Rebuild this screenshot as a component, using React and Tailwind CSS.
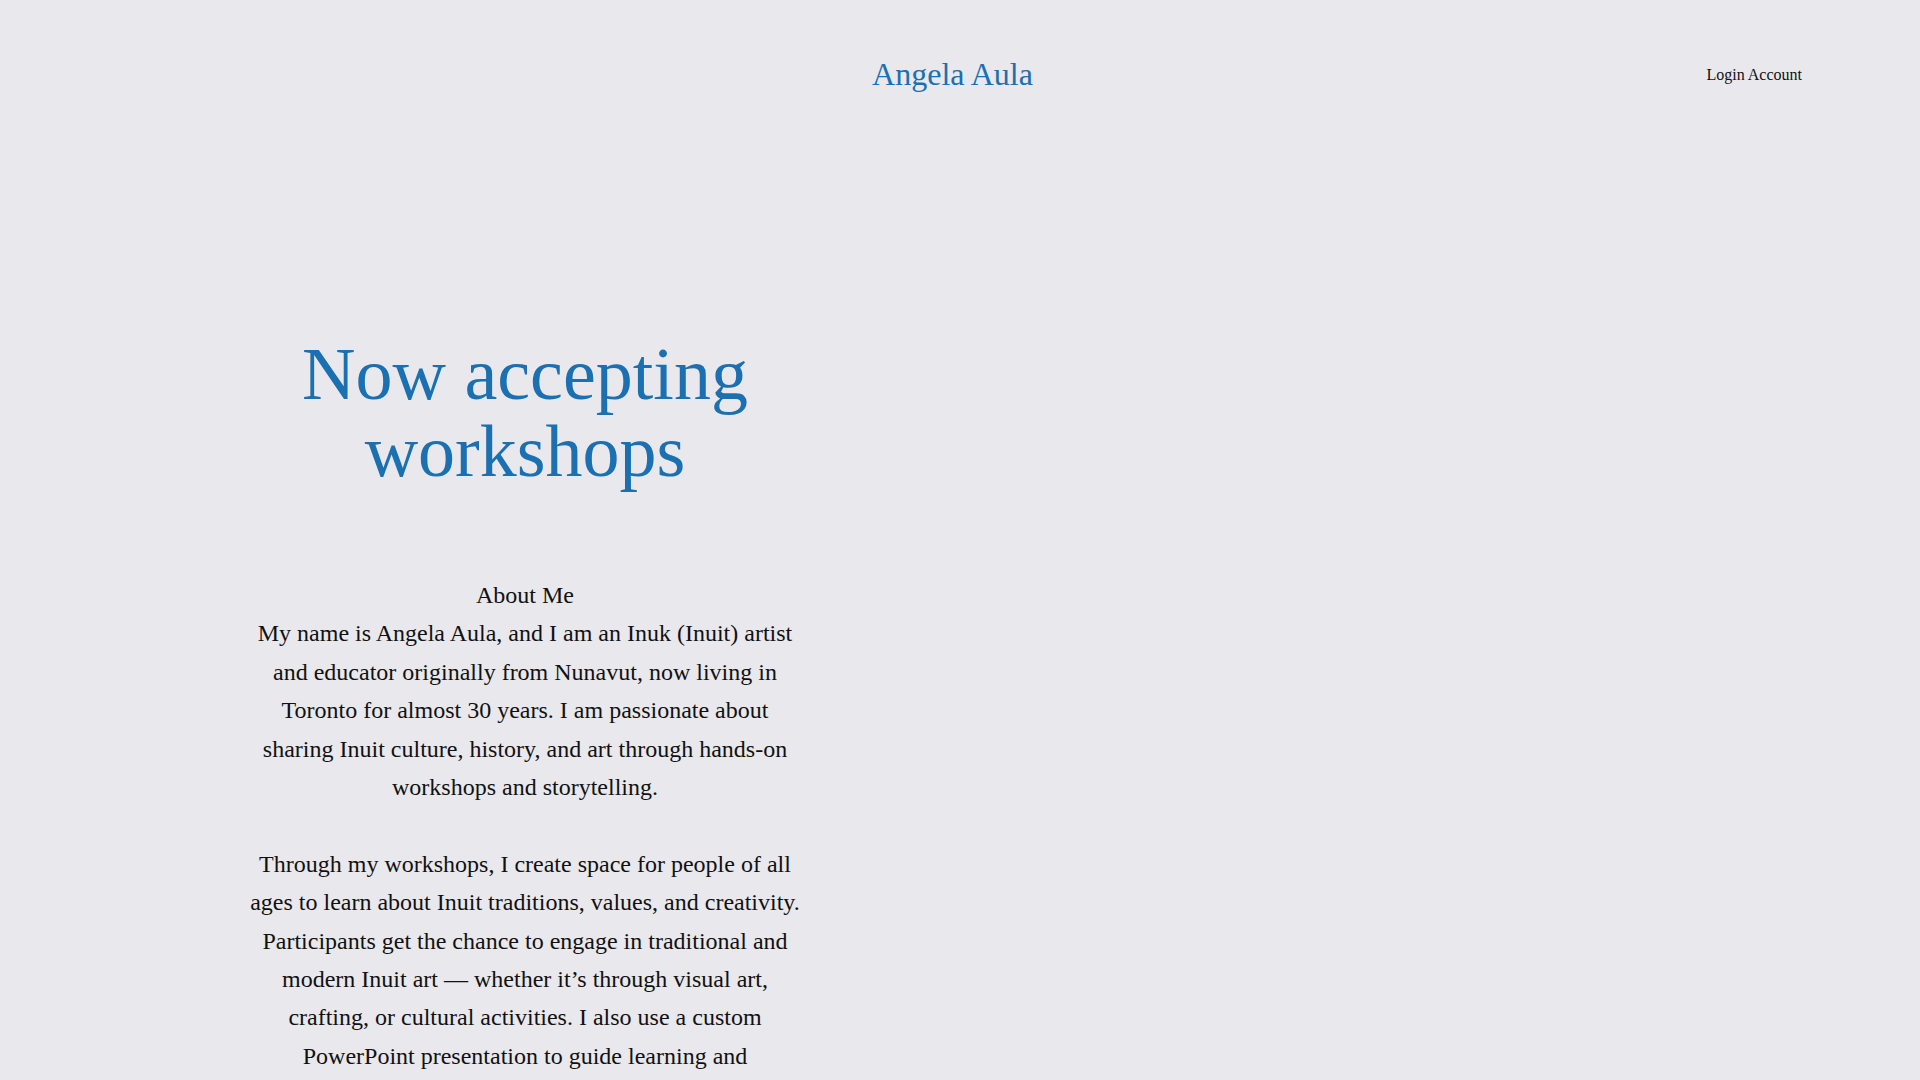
import React from 'react';

// Simple landing page: centered name, login link, left intro column
const Header = () => (
    <header className="grid grid-cols-[1fr_auto_1fr] items-center h-[148px] px-[103px]">
        <div></div>
        <a href="#" className="text-[32px] leading-[37px] text-[#1b70b1]">Angela Aula</a>
        <div className="flex justify-end pt-[2px]">
            <a href="#" className="text-[16px] leading-[18px] text-[#111]">Login Account</a>
        </div>
    </header>
);

const App = () => {
    return (
        <div className="min-h-[2510px] bg-[#e9e8ed] font-['Liberation_Serif',serif] text-[#111]">
            <div className="mr-[15px]">
                <Header />
                <main className="flex pl-[245px] pt-[188px]">
                    <section className="w-[560px] text-center">
                        <h1 className="text-[74px] leading-[77px] font-normal text-[#1b70b1]">
                            Now accepting workshops
                        </h1>
                        <div className="mt-[86px] text-[24px] leading-[38.4px]">
                            <h2 className="font-normal">About Me</h2>
                            <p>
                                My name is Angela Aula, and I am an Inuk (Inuit) artist and educator originally from Nunavut, now living in Toronto for almost 30 years. I am passionate about sharing Inuit culture, history, and art through hands-on workshops and storytelling.
                            </p>
                            <p className="mt-[38.4px]">
                                Through my workshops, I create space for people of all ages to learn about Inuit traditions, values, and creativity. Participants get the chance to engage in traditional and modern Inuit art — whether it’s through visual art, crafting, or cultural activities. I also use a custom PowerPoint presentation to guide learning and conversation about Inuit life in the North.
                            </p>
                            <p className="mt-[38.4px]">
                                Workshops are available for schools, libraries, community centres and organizations across the Greater Toronto Area.
                            </p>
                        </div>
                    </section>
                    <div className="flex-1"></div>
                </main>
            </div>
        </div>
    );
};

export default App;
